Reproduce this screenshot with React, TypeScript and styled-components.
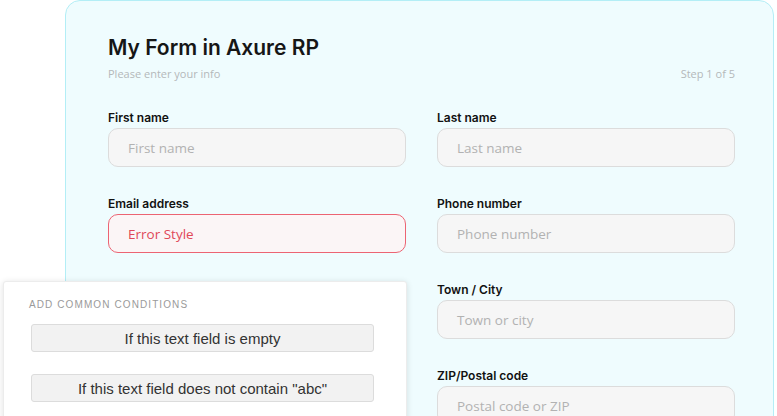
import styled, { createGlobalStyle } from 'styled-components';

const GlobalStyle = createGlobalStyle`
  * { box-sizing: border-box; }
  body {
    margin: 0;
    background: #ffffff;
  }
`;

interface Field {
  label: string;
  placeholder: string;
  error?: boolean;
}

const leftFields: Field[] = [
  { label: 'First name', placeholder: 'First name' },
  { label: 'Email address', placeholder: 'Error Style', error: true },
  { label: '', placeholder: '' },
];

const rightFields: Field[] = [
  { label: 'Last name', placeholder: 'Last name' },
  { label: 'Phone number', placeholder: 'Phone number' },
  { label: 'Town / City', placeholder: 'Town or city' },
  { label: 'ZIP/Postal code', placeholder: 'Postal code or ZIP' },
];

const conditions = ['If this text field is empty', 'If this text field does not contain "abc"'];

function FormField({ label, placeholder, error }: Field) {
  return (
    <FieldBox>
      <Label>{label}</Label>
      <Input $error={error}>{placeholder}</Input>
    </FieldBox>
  );
}

export default function App() {
  return (
    <Page>
      <GlobalStyle />
      <Card>
        <Header>
          <Title>My Form in Axure RP</Title>
          <SubRow>
            <Hint>Please enter your info</Hint>
            <Hint>Step 1 of 5</Hint>
          </SubRow>
        </Header>
        <Columns>
          <Column>
            {leftFields.map((f, i) => (
              <FormField key={i} {...f} />
            ))}
          </Column>
          <Column>
            {rightFields.map((f) => (
              <FormField key={f.label} {...f} />
            ))}
          </Column>
        </Columns>
      </Card>
      <Popup>
        <PopupTitle>ADD COMMON CONDITIONS</PopupTitle>
        <ConditionList>
          {conditions.map((c) => (
            <ConditionButton key={c}>{c}</ConditionButton>
          ))}
        </ConditionList>
      </Popup>
    </Page>
  );
}

const Page = styled.div`
  position: relative;
  width: 777px;
  height: 416px;
  overflow: hidden;
  background: #ffffff;
  padding: 0 3px 0 65px;
`;

const Card = styled.div`
  height: 520px;
  background: #effcfe;
  border: 1px solid #b3eef6;
  border-radius: 15px;
  padding: 34px 38px 0 42px;
`;

const Header = styled.div`
  display: flex;
  flex-direction: column;
  gap: 6px;
`;

const Title = styled.h1`
  margin: 0;
  font-family: Inter, 'Noto Sans', sans-serif;
  font-size: 21px;
  line-height: 25px;
  font-weight: 600;
  color: #161616;
`;

const SubRow = styled.div`
  display: flex;
  justify-content: space-between;
`;

const Hint = styled.span`
  font-family: 'Open Sans', sans-serif;
  font-size: 11px;
  line-height: 16px;
  color: #b4b8ba;
`;

const Columns = styled.div`
  display: grid;
  grid-template-columns: 298px 298px;
  column-gap: 31px;
  margin-top: 16px;
`;

const Column = styled.div`
  display: flex;
  flex-direction: column;
  gap: 17px;
`;

const FieldBox = styled.div`
  display: flex;
  flex-direction: column;
  gap: 2px;
`;

const Label = styled.div`
  height: 28px;
  display: flex;
  align-items: flex-end;
  font-family: Inter, 'Noto Sans', sans-serif;
  font-size: 12px;
  line-height: 16px;
  font-weight: 600;
  color: #111111;
`;

const Input = styled.div<{ $error?: boolean }>`
  height: 39px;
  display: flex;
  align-items: center;
  padding: 0 19px;
  border-radius: 10px;
  background: ${(p) => (p.$error ? '#fbf5f6' : '#f6f6f6')};
  border: 1px solid ${(p) => (p.$error ? '#ec6473' : '#dcdcdc')};
  font-family: 'Open Sans', sans-serif;
  font-size: 13.5px;
  color: ${(p) => (p.$error ? '#e04858' : '#b2b2b2')};
`;

const Popup = styled.div`
  position: absolute;
  left: 3px;
  top: 281px;
  width: 404px;
  height: 160px;
  background: #ffffff;
  border: 1px solid #ececec;
  border-radius: 3px;
  box-shadow: 0 1px 6px rgba(0, 0, 0, 0.12);
  padding: 16px 32px 0 25px;
`;

const PopupTitle = styled.div`
  font-family: 'Liberation Sans', Arial, sans-serif;
  font-size: 10px;
  line-height: 14px;
  letter-spacing: 1.1px;
  color: #9a9a9a;
`;

const ConditionList = styled.div`
  display: flex;
  flex-direction: column;
  gap: 22px;
  margin-top: 12px;
  padding-left: 2px;
`;

const ConditionButton = styled.div`
  height: 28px;
  display: flex;
  align-items: center;
  justify-content: center;
  background: #f2f2f2;
  border: 1px solid #dcdcdc;
  border-radius: 3px;
  font-family: 'Liberation Sans', Arial, sans-serif;
  font-size: 15px;
  color: #333333;
`;
